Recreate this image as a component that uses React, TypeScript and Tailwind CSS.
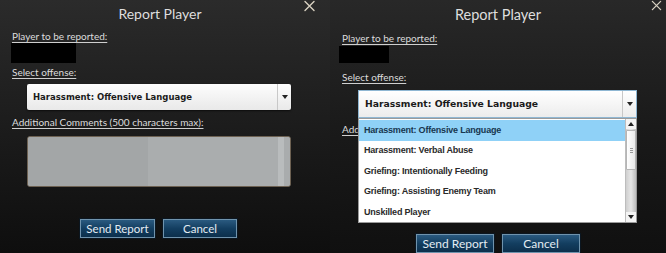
import React from "react";

const offenses = [
  "Harassment: Offensive Language",
  "Harassment: Verbal Abuse",
  "Griefing: Intentionally Feeding",
  "Griefing: Assisting Enemy Team",
  "Unskilled Player",
];

const CloseIcon: React.FC<{ className?: string }> = ({ className }) => (
  <svg viewBox="0 0 12 12" className={className}>
    <path d="M1.5 1.5 L10.5 10.5 M10.5 1.5 L1.5 10.5" stroke="#d9d2c2" strokeWidth="1.4" strokeLinecap="round" />
  </svg>
);

const Label: React.FC<{ children: React.ReactNode; className?: string }> = ({ children, className }) => (
  <div className={`font-['Lato',sans-serif] text-[10px] leading-[12px] text-[#dcdcdc] underline underline-offset-[2px] decoration-[#cfcfcf] ${className ?? ""}`}>
    {children}
  </div>
);

const GameButton: React.FC<{ children: React.ReactNode; className?: string }> = ({ children, className }) => (
  <button
    className={`h-[19px] border border-[#6f93ad] bg-gradient-to-b from-[#2a5a80] via-[#133e60] to-[#0c2f4c] font-['Lato',sans-serif] text-[11.5px] leading-none text-[#e3ecf3] shadow-[0_0_0_1px_#0b1620] ${className ?? ""}`}
  >
    {children}
  </button>
);

const Arrow: React.FC<{ up?: boolean }> = ({ up }) => (
  <svg viewBox="0 0 6 4" className="w-[6px] h-[4px]">
    <path d={up ? "M0 4 L3 0 L6 4 Z" : "M0 0 L6 0 L3 4 Z"} fill="#222" />
  </svg>
);

const LeftPanel: React.FC = () => (
  <div className="relative w-[330px] h-[253px] bg-gradient-to-b from-[#2b2b2b] via-[#1c1c1c] to-[#0e0e0e] pl-[12px]">
    <CloseIcon className="absolute top-0 left-[303px] w-[13px] h-[12px]" />
    <div className="pr-[22px] pt-[5px] text-center font-['Lato',sans-serif] text-[14px] leading-[18px] text-[#dedede]">
      Report Player
    </div>
    <Label className="mt-[7px]">Player to be reported:</Label>
    <div className="ml-[-1px] mt-[1px] w-[65px] h-[20px] bg-black" />
    <Label className="mt-[3px]">Select offense:</Label>
    <div className="ml-[15px] mt-[6px] flex w-[264px] h-[26px] rounded-[2px] bg-gradient-to-b from-[#fdfdfd] to-[#e9e9e9] shadow-[0_1px_2px_rgba(0,0,0,0.6)]">
      <div className="flex-1 flex items-center pl-[6px] font-['DejaVu_Sans',sans-serif] font-bold text-[8.5px] text-[#1b1b1b]">
        Harassment: Offensive Language
      </div>
      <div className="w-[14px] flex items-center justify-center border-l border-[#c8c8c8]">
        <Arrow />
      </div>
    </div>
    <Label className="mt-[6px]">Additional Comments (500 characters max):</Label>
    <div className="ml-[15px] mt-[8px] flex w-[264px] h-[51px] rounded-[3px] border border-[#6d6152] bg-[#a5a8a9] overflow-hidden">
      <div className="flex-1 bg-[#a3a6a7]" />
      <div className="w-[130px] bg-[#aaadae]" />
      <div className="w-[6px] bg-[#b9bcbd]" />
      <div className="w-[6px] bg-[#a9acad]" />
    </div>
    <div className="mt-[32px] ml-[68px] flex gap-[8px]">
      <GameButton className="w-[75px]">Send Report</GameButton>
      <GameButton className="w-[74px]">Cancel</GameButton>
    </div>
  </div>
);

const RightPanel: React.FC = () => (
  <div className="relative w-[336px] h-[253px] bg-gradient-to-b from-[#282828] via-[#1a1a1a] to-[#101010] pl-[12px]">
    <CloseIcon className="absolute top-0 left-[320px] w-[13px] h-[11px]" />
    <div className="pt-[5px] text-center pr-[12px] font-['Lato',sans-serif] text-[14.5px] leading-[19px] text-[#dedede]">
      Report Player
    </div>
    <Label className="mt-[8px]">Player to be reported:</Label>
    <div className="ml-[-3px] mt-[2px] w-[50px] h-[17px] bg-black" />
    <Label className="mt-[8px]">Select offense:</Label>
    <div className="relative ml-[16px] mt-[7px] w-[279px]">
      <div className="flex h-[28px] border border-[#8fb7d3] bg-gradient-to-b from-[#ffffff] to-[#ececec]">
        <div className="flex-1 flex items-center pl-[6px] font-['DejaVu_Sans',sans-serif] font-bold text-[9.25px] text-[#1b1b1b]">
          Harassment: Offensive Language
        </div>
        <div className="w-[14px] flex items-center justify-center border-l border-[#c8c8c8]">
          <Arrow />
        </div>
      </div>
      <div className="absolute left-0 top-[28px] z-10 flex w-[279px] h-[105px] border border-[#9a9a9a] bg-white">
        <div className="flex-1 pt-px">
          {offenses.map((o, i) => (
            <div
              key={o}
              className={`h-[20.5px] flex items-center pl-[5px] font-['Liberation_Sans',sans-serif] text-[9px] tracking-[-0.2px] font-bold ${
                i === 0 ? "bg-[#8fd1f7] text-[#17364f]" : "text-[#2a2a2a]"
              }`}
            >
              {o}
            </div>
          ))}
        </div>
        <div className="w-[11px] flex flex-col bg-gradient-to-r from-[#cfcfcf] via-[#e6e6e6] to-[#bdbdbd] border-l border-[#bdbdbd]">
          <div className="h-[10px] flex items-center justify-center bg-[#f4f4f4]">
            <Arrow up />
          </div>
          <div className="mt-[1px] h-[40px] flex flex-col items-center justify-center gap-[1px] rounded-[1px] border border-[#b5b5b5] bg-gradient-to-r from-[#ffffff] to-[#e9e9e9]">
            <div className="w-[3px] h-px bg-[#999]" />
            <div className="w-[3px] h-px bg-[#999]" />
            <div className="w-[3px] h-px bg-[#999]" />
          </div>
          <div className="flex-1" />
          <div className="h-[10px] flex items-center justify-center bg-[#f4f4f4]">
            <Arrow />
          </div>
        </div>
      </div>
    </div>
    <Label className="mt-[5px]">Additional Comments (500 characters max):</Label>
    <div className="ml-[16px] mt-[8px] w-[279px] h-[55px] rounded-[3px] border border-[#6d6152] bg-[#a5a8a9]" />
    <div className="mt-[36px] ml-[74px] flex gap-[8px]">
      <GameButton className="w-[78px] text-[12px]">Send Report</GameButton>
      <GameButton className="w-[78px] text-[12px]">Cancel</GameButton>
    </div>
  </div>
);

export default function App() {
  return (
    <div className="flex w-[666px] h-[253px] overflow-hidden bg-[#141414]">
      <LeftPanel />
      <RightPanel />
    </div>
  );
}
